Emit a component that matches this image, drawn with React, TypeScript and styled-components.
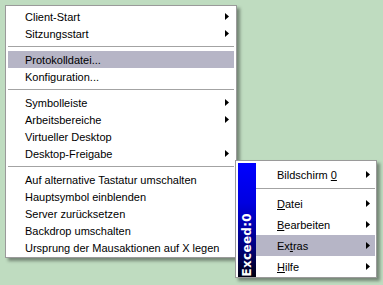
import styled, { createGlobalStyle } from 'styled-components'

const Global = createGlobalStyle`
    html, body {
        margin: 0;
        padding: 0;
        background: #bfdcc0;
    }
    body {
        font-family: "Liberation Sans", Arial, sans-serif;
        font-size: 11px;
        color: #000;
    }
`;

const Desktop = styled.div`
    position: relative;
    width: 383px;
    height: 285px;
    overflow: hidden;
    background: #bfdcc0;
`;

const Menu = styled.div<{ $left: number; $top: number; $width: number; $z?: number }>`
    position: absolute;
    left: ${p => p.$left}px;
    top: ${p => p.$top}px;
    width: ${p => p.$width}px;
    box-sizing: border-box;
    z-index: ${p => p.$z ?? 1};
    background: #fff;
    border: 1px solid #9a9a9a;
    box-shadow: 3px 3px 3px rgba(0, 0, 0, 0.38);
`;

const List = styled.div<{ $pad: string }>`
    display: flex;
    flex-direction: column;
    padding: ${p => p.$pad};
    flex: 1;
`;

const Item = styled.div<{ $h: number; $indent: number; $active?: boolean }>`
    display: flex;
    align-items: center;
    height: ${p => p.$h}px;
    padding: 0 5px 0 ${p => p.$indent}px;
    background: ${p => (p.$active ? '#b6b5c6' : 'transparent')};
    white-space: nowrap;
`;

const Label = styled.span`
    flex: 1;
`;

const Sep = styled.div<{ $top: number; $bottom: number }>`
    height: 1px;
    background: #a3a3a3;
    margin: ${p => p.$top}px 0 ${p => p.$bottom}px;
`;

const Split = styled.div`
    display: flex;
    padding: 2px 0 0 2px;
`;

const Strip = styled.div`
    width: 18px;
    margin-bottom: 0;
    background: linear-gradient(to bottom, #0000ff 0%, #0000e0 35%, #00007a 75%, #000010 100%);
    display: flex;
    flex-direction: column;
    justify-content: flex-end;
    align-items: center;
    padding-bottom: 1px;
`;

const StripText = styled.span`
    writing-mode: vertical-rl;
    transform: rotate(180deg);
    color: #fff;
    font-family: "DejaVu Sans", Verdana, sans-serif;
    font-weight: bold;
    font-size: 12px;
    letter-spacing: 0.3px;
    line-height: 18px;
`;

function Arrow() {
    return (
        <svg width="4" height="7" viewBox="0 0 4 7">
            <polygon points="0,0 4,3.5 0,7" fill="#000" />
        </svg>
    );
}

type Entry = { label: React.ReactNode; sub?: boolean; active?: boolean } | 'sep';

const mainItems: Entry[] = [
    { label: 'Client-Start', sub: true },
    { label: 'Sitzungsstart', sub: true },
    'sep',
    { label: 'Protokolldatei...', active: true },
    { label: 'Konfiguration...' },
    'sep',
    { label: 'Symbolleiste', sub: true },
    { label: 'Arbeitsbereiche', sub: true },
    { label: 'Virtueller Desktop' },
    { label: 'Desktop-Freigabe', sub: true },
    'sep',
    { label: 'Auf alternative Tastatur umschalten' },
    { label: 'Hauptsymbol einblenden' },
    { label: 'Server zurücksetzen' },
    { label: 'Backdrop umschalten' },
    { label: 'Ursprung der Mausaktionen auf X legen' },
];

const exceedItems: Entry[] = [
    { label: <>Bildschirm <u>0</u></>, sub: true },
    'sep',
    { label: <><u>D</u>atei</>, sub: true },
    { label: <><u>B</u>earbeiten</>, sub: true },
    { label: <>Ex<u>t</u>ras</>, sub: true, active: true },
    { label: <><u>H</u>ilfe</>, sub: true },
];

export default function App() {
    return (
        <>
            <Global />
            <Desktop>
                <Menu $left={5} $top={5} $width={232}>
                    <List $pad="2px 2px 1px">
                        {mainItems.map((e, i) =>
                            e === 'sep' ? (
                                <Sep key={i} $top={4} $bottom={4} />
                            ) : (
                                <Item key={i} $h={17} $indent={17} $active={e.active}>
                                    <Label>{e.label}</Label>
                                    {e.sub && <Arrow />}
                                </Item>
                            )
                        )}
                    </List>
                </Menu>
                <Menu $left={235} $top={160} $width={142} $z={2}>
                    <Split>
                        <Strip>
                            <StripText>Exceed:0</StripText>
                        </Strip>
                        <List $pad="1px 1px 0 0">
                            {exceedItems.map((e, i) =>
                                e === 'sep' ? (
                                    <Sep key={i} $top={3} $bottom={4} />
                                ) : (
                                    <Item key={i} $h={21} $indent={21} $active={e.active}>
                                        <Label>{e.label}</Label>
                                        {e.sub && <Arrow />}
                                    </Item>
                                )
                            )}
                        </List>
                    </Split>
                </Menu>
            </Desktop>
        </>
    )
}
